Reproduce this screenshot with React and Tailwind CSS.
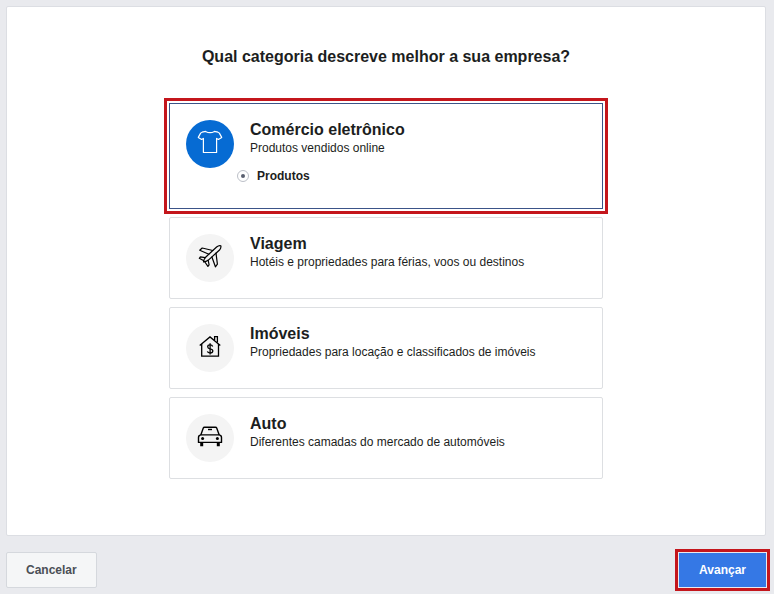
import React, { useState } from 'react';

const ShirtIcon = () => (
  <svg className="w-7 h-7" viewBox="0 0 28 28" fill="none" stroke="currentColor" strokeWidth="1.2" strokeLinejoin="round">
    <path d="M9.6 3.4 Q14 6 18.4 3.4 L21.9 4.2 Q22.9 4.5 23.5 5.4 L25.7 9.4 L22.4 11.4 L20.6 10.4 V24.5 H7.4 V10.4 L5.6 11.4 L2.3 9.4 L4.5 5.4 Q5.1 4.5 6.1 4.2 Z" />
  </svg>
);

const PlaneIcon = () => (
  <svg className="w-7 h-7" viewBox="0 0 28 28" fill="none" stroke="currentColor" strokeWidth="1.2" strokeLinejoin="round" strokeLinecap="round">
    <path d="M24.8 3.7 Q22.8 3.1 20.6 5 L9.6 15.2 Q7.7 17.5 7.5 19.9 Q10.1 19.8 12.4 18.1 L23.5 8 Q25.4 5.8 24.8 3.7 Z" />
    <path d="M16.8 8.5 L6.2 6 L3.7 8.2 L12.9 12.2" />
    <path d="M20 11.2 L21.4 22.2 L19.4 24.8 L15.9 15" />
    <path d="M9.2 15.7 L4.4 14.9 L3.3 16.3 L7.8 18.8" />
    <path d="M12.2 18.4 L13.1 22.8 L11.9 24.4 L8.9 20" />
  </svg>
);

const HouseIcon = () => (
  <svg className="w-7 h-7" viewBox="0 0 28 28" fill="none" stroke="currentColor" strokeWidth="1.3">
    <path d="M3.7 13.4 L14 4.9 L24.3 13.4" />
    <path d="M5.7 12 V24.2 H22.5 V12" />
    <path d="M18.6 8 V4.7 H21.4 V10.6" />
    <path d="M16.7 14.4 Q16.1 12.9 14.1 12.9 Q11.7 12.9 11.7 14.7 Q11.7 16.3 14.1 16.8 Q16.8 17.3 16.8 19 Q16.8 20.9 14.1 20.9 Q11.8 20.9 11.4 19.3" />
    <path d="M14.1 11.3 V22.4" />
  </svg>
);

const CarIcon = () => (
  <svg className="w-7 h-7" viewBox="0 0 28 28" fill="none" stroke="currentColor" strokeWidth="1.4" strokeLinejoin="round">
    <path d="M4.8 12.9 L7.3 6.1 Q7.6 5.3 8.5 5.3 H19.5 Q20.4 5.3 20.7 6.1 L23.2 12.9" />
    <path d="M4.8 12.9 H23.2 Q25.5 13.3 25.5 15.6 V20.4 H2.5 V15.6 Q2.5 13.3 4.8 12.9 Z" />
    <path d="M12 7.5 H16" />
    <circle cx="6.6" cy="16.6" r="1.5" fill="currentColor" stroke="none" />
    <circle cx="21.4" cy="16.6" r="1.5" fill="currentColor" stroke="none" />
    <path d="M4.2 20.4 H7.2 V24.2 H4.2 Z M20.8 20.4 H23.8 V24.2 H20.8 Z" fill="currentColor" stroke="none" />
  </svg>
);

const categories = [
  {
    id: 'ecommerce',
    title: 'Comércio eletrônico',
    description: 'Produtos vendidos online',
    icon: ShirtIcon,
    options: ['Produtos']
  },
  {
    id: 'travel',
    title: 'Viagem',
    description: 'Hotéis e propriedades para férias, voos ou destinos',
    icon: PlaneIcon
  },
  {
    id: 'real-estate',
    title: 'Imóveis',
    description: 'Propriedades para locação e classificados de imóveis',
    icon: HouseIcon
  },
  {
    id: 'auto',
    title: 'Auto',
    description: 'Diferentes camadas do mercado de automóveis',
    icon: CarIcon
  }
];

const CategoryCard = ({ category, selected, onSelect }) => {
  const Icon = category.icon;

  return (
    <div
      className={`border p-4 ${
        selected
          ? 'border-[#3b5488] outline-3 outline-offset-2 outline-[#c4161c]'
          : 'border-[#dddfe2] rounded-xs'
      }`}
    >
      <button
        type="button"
        onClick={onSelect}
        aria-pressed={selected}
        className="w-full flex items-start gap-4 text-left cursor-pointer"
      >
        <span
          className={`w-12 h-12 pb-1 shrink-0 rounded-full flex items-center justify-center ${
            selected ? 'bg-[#066bd3] text-white' : 'bg-[#f4f4f4] text-black'
          }`}
        >
          <Icon />
        </span>
        <span>
          <span className="block text-base leading-5 font-bold">{category.title}</span>
          <span className="block text-xs leading-4">{category.description}</span>
        </span>
      </button>

      {selected && category.options && (
        <div className="pl-[51px] pb-2">
          {category.options.map((option) => (
            <label key={option} className="flex items-center gap-2 text-xs leading-4 font-bold">
              <input
                type="radio"
                name="option"
                defaultChecked
                className="appearance-none w-3 h-3 rounded-full border border-[#bcc0c8] bg-white flex items-center justify-center before:w-1 before:h-1 before:rounded-full checked:before:bg-[#5a6070]"
              />
              {option}
            </label>
          ))}
        </div>
      )}
    </div>
  );
};

const App = () => {
  const [selected, setSelected] = useState('ecommerce');

  return (
    <div className="min-h-screen bg-[#e9eaee] pt-1.5 pl-1.5 pr-2 pb-1.5 font-['Liberation_Sans',Arial,sans-serif] text-[#1c1e21]">
      <main className="bg-white border border-[#dcdee3] rounded-xs px-4 pt-10 pb-14">
        <h1 className="text-base leading-5 font-bold text-center mb-9">
          Qual categoria descreve melhor a sua empresa?
        </h1>
        <div className="max-w-[434px] mx-auto flex flex-col gap-2">
          {categories.map((category) => (
            <CategoryCard
              key={category.id}
              category={category}
              selected={selected === category.id}
              onSelect={() => setSelected(category.id)}
            />
          ))}
        </div>
      </main>

      <footer className="flex items-center justify-between mt-4">
        <button
          type="button"
          className="h-9 px-[19px] border border-[#d5d8dd] rounded-xs bg-[#f5f6f7] text-[#4b4f56] text-xs leading-4 font-bold"
        >
          Cancelar
        </button>
        <button
          type="button"
          className="h-[34px] px-5 bg-[#3578e5] text-white text-xs leading-4 font-bold outline-3 outline-offset-1 outline-[#c4161c]"
        >
          Avançar
        </button>
      </footer>
    </div>
  );
};

export default App;
